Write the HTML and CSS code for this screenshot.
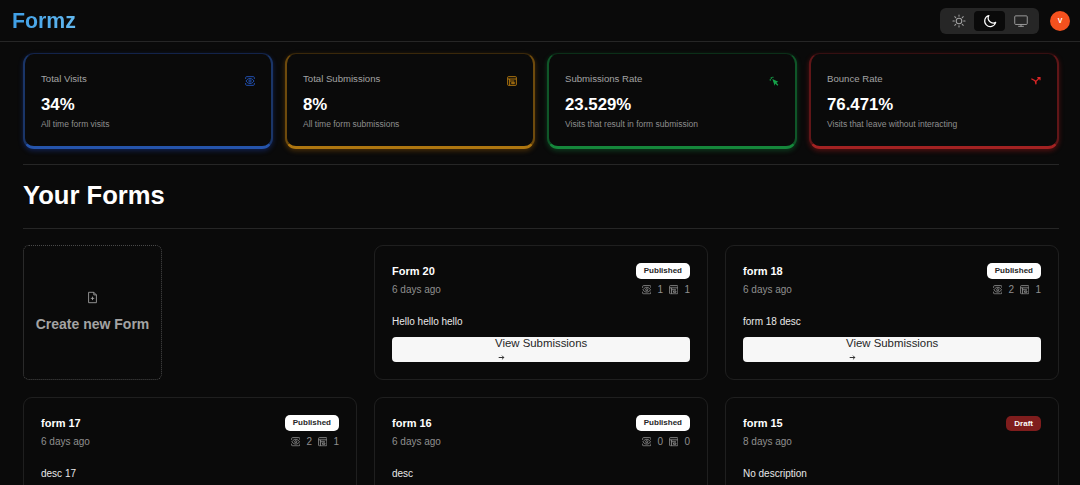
FILE: index.html
```html
<!DOCTYPE html>
<html lang="en">
<head>
<meta charset="utf-8">
<title>Formz</title>
<link rel="stylesheet" href="styles.css">
</head>
<body>
<svg class="defs" width="0" height="0" aria-hidden="true">
  <symbol id="eye" viewBox="0 0 15 15" fill="none" stroke="currentColor" stroke-width="1.4">
    <path d="M1 4.5V2.5A1.5 1.5 0 0 1 2.5 1h10A1.5 1.5 0 0 1 14 2.5v2"/>
    <path d="M1 10.5v2A1.5 1.5 0 0 0 2.5 14h10a1.5 1.5 0 0 0 1.5-1.5v-2"/>
    <path d="M1.5 7.5C3.2 5 5.2 3.8 7.5 3.8S11.8 5 13.5 7.5C11.8 10 9.8 11.2 7.5 11.2S3.2 10 1.5 7.5Z"/>
    <circle cx="7.5" cy="7.5" r="1.7"/>
  </symbol>
  <symbol id="form" viewBox="0 0 15 15" fill="none" stroke="currentColor" stroke-width="1.4">
    <rect x="1" y="1" width="13" height="13" rx="1"/>
    <path d="M1 4.5h13M4 4.5V14M4 7.5h7M7 9.5h4v2H7z"/>
  </symbol>
  <symbol id="arrow" viewBox="0 0 15 15" fill="none" stroke="currentColor" stroke-width="2">
    <path d="M1.5 7.5h11M8.5 3.5l4 4-4 4"/>
  </symbol>
</svg>

<header class="navbar">
  <div class="logo">Formz</div>
  <div class="nav-right">
    <div class="theme-switch">
      <button class="theme-btn" aria-label="Light">
        <svg class="theme-icon" viewBox="0 0 15 15" fill="none" stroke="currentColor" stroke-width="1.1" stroke-linecap="round">
          <circle cx="7.5" cy="7.5" r="3"/>
          <path d="M7.5 1v1.5M7.5 12.5V14M1 7.5h1.5M12.5 7.5H14M2.9 2.9 4 4M11 11l1.1 1.1M2.9 12.1 4 11M11 4l1.1-1.1"/>
        </svg>
      </button>
      <button class="theme-btn active" aria-label="Dark">
        <svg class="theme-icon" viewBox="0 0 15 15" fill="none" stroke="currentColor" stroke-width="1.3" stroke-linecap="round" stroke-linejoin="round">
          <path d="M6.3 1.6A6 6 0 1 0 13.6 9 5.4 5.4 0 0 1 6.3 1.6Z"/>
        </svg>
      </button>
      <button class="theme-btn" aria-label="System">
        <svg class="theme-icon" viewBox="0 0 15 15" fill="none" stroke="currentColor" stroke-width="1">
          <rect x="0.8" y="2" width="13.4" height="9.2" rx="1"/>
          <path d="M4.5 13.2h6M7.5 11.2v2"/>
        </svg>
      </button>
    </div>
    <div class="avatar">V</div>
  </div>
</header>

<main class="content">
  <section class="stats">
    <article class="stat stat-blue">
      <div class="stat-body">
        <h3 class="stat-title">Total Visits</h3>
        <div class="stat-value">34%</div>
        <p class="stat-help">All time form visits</p>
      </div>
      <svg class="stat-icon icon-blue"><use href="#eye"/></svg>
    </article>
    <article class="stat stat-yellow">
      <div class="stat-body">
        <h3 class="stat-title">Total Submissions</h3>
        <div class="stat-value">8%</div>
        <p class="stat-help">All time form submissions</p>
      </div>
      <svg class="stat-icon icon-yellow"><use href="#form"/></svg>
    </article>
    <article class="stat stat-green">
      <div class="stat-body">
        <h3 class="stat-title">Submissions Rate</h3>
        <div class="stat-value">23.529%</div>
        <p class="stat-help">Visits that result in form submission</p>
      </div>
      <svg class="stat-icon icon-green" viewBox="0 0 15 15" fill="currentColor">
        <path d="M5 4.5 14 8.5 11 10 14 13 12.5 14.5 9.6 11.4 8.5 14.5Z"/>
        <path d="M2.5 2h2v2h-2zM1 5h2v1.6H1zM5 1h1.6v2H5z"/>
      </svg>
    </article>
    <article class="stat stat-red">
      <div class="stat-body">
        <h3 class="stat-title">Bounce Rate</h3>
        <div class="stat-value">76.471%</div>
        <p class="stat-help">Visits that leave without interacting</p>
      </div>
      <svg class="stat-icon icon-red" viewBox="0 0 15 15" fill="none" stroke="currentColor" stroke-width="1.7">
        <path d="M0.5 4 6 7 7.5 12.5M7.5 12.5V8L12.5 3M9.5 2.5h4v4"/>
      </svg>
    </article>
  </section>

  <hr class="rule rule-stats">
  <h2 class="heading">Your Forms</h2>
  <hr class="rule rule-heading">

  <section class="grid">
    <div class="create-cell">
      <button class="create">
        <svg class="create-icon" viewBox="0 0 15 15" fill="none" stroke="currentColor" stroke-width="1">
          <path d="M3 1.5h6l3 3v9H3zM9 1.5v3h3M7.5 6.5v4M5.5 8.5h4"/>
        </svg>
        <span>Create new Form</span>
      </button>
    </div>

    <article class="card">
      <div class="card-head">
        <h3 class="card-title">Form 20</h3>
        <span class="badge">Published</span>
      </div>
      <div class="card-meta">
        <span>6 days ago</span>
        <span class="counts"><svg class="count-icon"><use href="#eye"/></svg><b>1</b><svg class="count-icon"><use href="#form"/></svg><b>1</b></span>
      </div>
      <p class="card-desc">Hello hello hello</p>
      <a class="view" href="#"><span class="view-text">View Submissions</span><svg class="view-arrow"><use href="#arrow"/></svg></a>
    </article>

    <article class="card">
      <div class="card-head">
        <h3 class="card-title">form 18</h3>
        <span class="badge">Published</span>
      </div>
      <div class="card-meta">
        <span>6 days ago</span>
        <span class="counts"><svg class="count-icon"><use href="#eye"/></svg><b>2</b><svg class="count-icon"><use href="#form"/></svg><b>1</b></span>
      </div>
      <p class="card-desc">form 18 desc</p>
      <a class="view" href="#"><span class="view-text">View Submissions</span><svg class="view-arrow"><use href="#arrow"/></svg></a>
    </article>

    <article class="card">
      <div class="card-head">
        <h3 class="card-title">form 17</h3>
        <span class="badge">Published</span>
      </div>
      <div class="card-meta">
        <span>6 days ago</span>
        <span class="counts"><svg class="count-icon"><use href="#eye"/></svg><b>2</b><svg class="count-icon"><use href="#form"/></svg><b>1</b></span>
      </div>
      <p class="card-desc">desc 17</p>
    </article>

    <article class="card">
      <div class="card-head">
        <h3 class="card-title">form 16</h3>
        <span class="badge">Published</span>
      </div>
      <div class="card-meta">
        <span>6 days ago</span>
        <span class="counts"><svg class="count-icon"><use href="#eye"/></svg><b>0</b><svg class="count-icon"><use href="#form"/></svg><b>0</b></span>
      </div>
      <p class="card-desc">desc</p>
    </article>

    <article class="card">
      <div class="card-head">
        <h3 class="card-title">form 15</h3>
        <span class="badge badge-draft">Draft</span>
      </div>
      <div class="card-meta">
        <span>8 days ago</span>
      </div>
      <p class="card-desc">No description</p>
    </article>
  </section>
</main>
</body>
</html>
```
FILE: styles.css
```css
* { box-sizing: border-box; }
html, body { margin: 0; height: 485px; overflow: hidden; }
body {
  background: #0a0a0a;
  color: #fafafa;
  font-family: "Liberation Sans", Arial, sans-serif;
}
.defs { position: absolute; }

.navbar {
  height: 42px;
  border-bottom: 1px solid #262626;
  display: flex;
  align-items: center;
  justify-content: space-between;
  padding: 0 10px 0 12px;
}
.logo {
  font-size: 21.3px;
  font-weight: 700;
  line-height: 40px;
  color: #4fa8e8;
  background: linear-gradient(90deg, #3f9fe6, #62b8f0);
  -webkit-background-clip: text;
  background-clip: text;
  -webkit-text-fill-color: transparent;
}
.nav-right { display: flex; align-items: center; gap: 11px; height: 41px; }
.theme-switch {
  display: flex;
  background: #262626;
  border-radius: 6px;
  padding: 3px;
  height: 26px;
  width: 99px;
}
.theme-btn {
  flex: 1;
  border: 0;
  padding: 0;
  background: transparent;
  color: #a3a3a3;
  border-radius: 4px;
  display: flex;
  align-items: center;
  justify-content: center;
}
.theme-btn.active { background: #0a0a0a; color: #fafafa; }
.theme-icon { width: 14px; height: 14px; }
.avatar {
  width: 20px;
  height: 20px;
  border-radius: 50%;
  background: #f4511e;
  color: #fff;
  font-size: 7px;
  font-weight: 700;
  display: flex;
  align-items: center;
  justify-content: center;
}

.content { padding: 11px 21px 0 23px; }

.stats {
  display: grid;
  grid-template-columns: repeat(4, 250px);
  gap: 12px;
}
.stat {
  height: 96px;
  border-radius: 11px;
  border-style: solid;
  border-width: 1px 2px 3px;
  background: #0a0a0a;
  padding: 19px 16px 0;
  display: flex;
  justify-content: space-between;
  align-items: flex-start;
}
.stat-blue { border-color: #13234a #1a3568 #2554ab; box-shadow: 0 2px 5px #1e40af66; }
.stat-yellow { border-color: #3a280a #6e4a0c #ae7610; box-shadow: 0 2px 5px #a1620766; }
.stat-green { border-color: #0b2f18 #0f5628 #15873b; box-shadow: 0 2px 5px #15803d66; }
.stat-red { border-color: #360f11 #601618 #a32222; box-shadow: 0 2px 5px #b91c1c66; }
.stat-title { margin: 0; font-size: 9.6px; line-height: 12px; font-weight: 400; color: #a3a3a3; }
.stat-value { margin-top: 9px; font-size: 16.8px; line-height: 22px; font-weight: 700; color: #fff; }
.stat-help { margin: 2px 0 0; font-size: 8.5px; line-height: 12px; color: #8f8f8f; }
.stat-icon { width: 10px; height: 10px; margin-top: 3px; }
.icon-blue { color: #2354b8; }
.icon-yellow { color: #b97d10; }
.icon-green { color: #16a34a; }
.icon-red { color: #dc2626; }

.rule { border: 0; height: 1px; margin: 0; background: #262626; width: 1036px; }
.rule-stats { margin-top: 15px; }
.heading { margin: 0; font-size: 25.6px; line-height: 30px; font-weight: 700; color: #fff; padding-top: 15px; height: 63px; }
.rule-heading { margin-bottom: 16px; }

.grid {
  display: grid;
  grid-template-columns: repeat(3, 334px);
  grid-template-rows: 135px 135px;
  gap: 17px;
}
.create-cell { display: flex; }
.create {
  width: 139px;
  height: 135px;
  background: transparent;
  border: 1px dotted #4a4a4a;
  border-radius: 6px;
  color: #a3a3a3;
  font: 700 14px/20px "Liberation Sans", Arial, sans-serif;
  display: flex;
  flex-direction: column;
  align-items: center;
  justify-content: center;
  gap: 10px;
  padding: 0;
}
.create-icon { width: 13px; height: 13px; }

.card {
  border: 1px solid #1f1f1f;
  border-radius: 9px;
  padding: 17px 17px 0;
  display: flex;
  flex-direction: column;
}
.card-head { display: flex; justify-content: space-between; align-items: center; height: 16px; }
.card-title { margin: 0; font-size: 11px; line-height: 16px; font-weight: 700; color: #fff; }
.badge {
  background: #fff;
  color: #262626;
  border-radius: 5px;
  font-size: 8px;
  font-weight: 700;
  line-height: 16px;
  height: 16px;
  padding: 0 8px;
}
.badge-draft { background: #7f1d1d; color: #fafafa; line-height: 15px; height: 15px; }
.card-meta {
  display: flex;
  justify-content: space-between;
  align-items: center;
  margin-top: 3px;
  height: 16px;
  font-size: 10px;
  line-height: 16px;
  color: #8f8f8f;
}
.counts { display: flex; align-items: center; gap: 6px; }
.counts b { font-weight: 400; }
.count-icon { width: 9.5px; height: 9.5px; }
.card-desc { margin: 17px 0 0; font-size: 10px; line-height: 14px; color: #e8e8e8; height: 14px; }
.view {
  margin-top: 8px;
  height: 25px;
  background: #f7f7f7;
  color: #262626;
  border-radius: 4px;
  display: flex;
  flex-direction: column;
  align-items: flex-start;
  padding-left: 103px;
  text-decoration: none;
}
.view-text { font-size: 11.4px; line-height: 13px; }
.view-arrow { width: 7px; height: 7px; margin: 4px 0 0 3px; }
```
